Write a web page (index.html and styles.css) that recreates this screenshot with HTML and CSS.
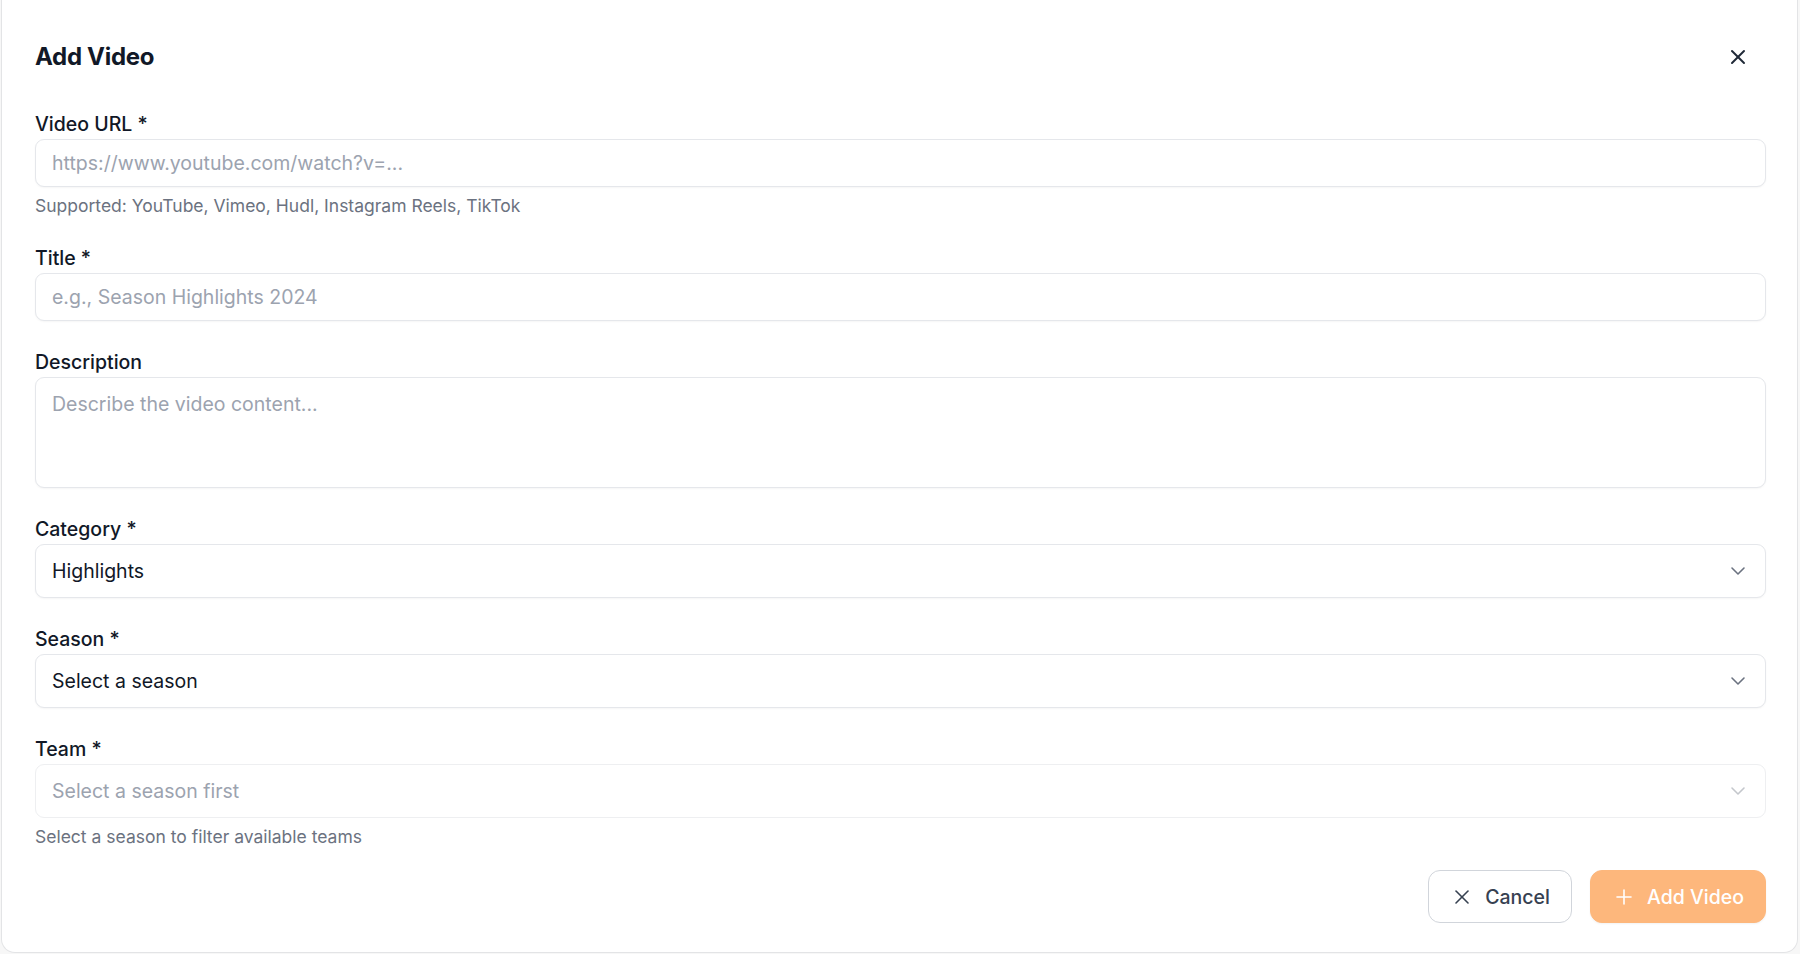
FILE: index.html
```html
<!DOCTYPE html>
<html lang="en">
<head>
<meta charset="utf-8">
<title>Add Video</title>
<link rel="stylesheet" href="styles.css">
</head>
<body>
<div class="modal">
  <div class="modal-header">
    <h2 class="modal-title">Add Video</h2>
    <button class="close-btn" aria-label="Close">
      <svg width="24" height="24" viewBox="0 0 24 24" fill="none" stroke="currentColor" stroke-width="2" stroke-linecap="round" stroke-linejoin="round"><path d="M18 6 6 18"/><path d="m6 6 12 12"/></svg>
    </button>
  </div>
  <form class="form">
    <div class="field">
      <label class="label">Video URL *</label>
      <div class="input placeholder">https://www.youtube.com/watch?v=...</div>
      <p class="help">Supported: YouTube, Vimeo, Hudl, Instagram Reels, TikTok</p>
    </div>
    <div class="field">
      <label class="label">Title *</label>
      <div class="input placeholder">e.g., Season Highlights 2024</div>
    </div>
    <div class="field">
      <label class="label">Description</label>
      <div class="textarea placeholder">Describe the video content...</div>
    </div>
    <div class="field">
      <label class="label">Category *</label>
      <div class="select">
        <span>Highlights</span>
        <svg class="chev" width="24" height="24" viewBox="0 0 24 24" fill="none" stroke="currentColor" stroke-width="1.6" stroke-linecap="round" stroke-linejoin="round"><path d="m6 9 6 6 6-6"/></svg>
      </div>
    </div>
    <div class="field">
      <label class="label">Season *</label>
      <div class="select">
        <span>Select a season</span>
        <svg class="chev" width="24" height="24" viewBox="0 0 24 24" fill="none" stroke="currentColor" stroke-width="1.6" stroke-linecap="round" stroke-linejoin="round"><path d="m6 9 6 6 6-6"/></svg>
      </div>
    </div>
    <div class="field">
      <label class="label">Team *</label>
      <div class="select disabled">
        <span>Select a season first</span>
        <svg class="chev" width="24" height="24" viewBox="0 0 24 24" fill="none" stroke="currentColor" stroke-width="1.6" stroke-linecap="round" stroke-linejoin="round"><path d="m6 9 6 6 6-6"/></svg>
      </div>
      <p class="help">Select a season to filter available teams</p>
    </div>
  </form>
  <div class="footer">
    <button class="btn btn-outline">
      <svg width="24" height="24" viewBox="0 0 24 24" fill="none" stroke="currentColor" stroke-width="1.6" stroke-linecap="round" stroke-linejoin="round"><path d="M18 6 6 18"/><path d="m6 6 12 12"/></svg>
      <span>Cancel</span>
    </button>
    <button class="btn btn-primary">
      <svg width="24" height="24" viewBox="0 0 24 24" fill="none" stroke="currentColor" stroke-width="1.6" stroke-linecap="round" stroke-linejoin="round"><path d="M5 12h14"/><path d="M12 5v14"/></svg>
      <span>Add Video</span>
    </button>
  </div>
</div>
</body>
</html>
```
FILE: styles.css
```css
* { box-sizing: border-box; }
html, body {
  margin: 0;
  padding: 0;
  height: 954px;
  background: #f7f7f7;
  font-family: Inter, "Noto Sans", "Liberation Sans", sans-serif;
  color: #111827;
  overflow: hidden;
}
.modal {
  margin-left: 1px;
  width: 1797px;
  height: 953px;
  background: #fff;
  border: 1px solid #e3e4e6;
  border-top: none;
  border-radius: 0 0 14px 14px;
  padding: 41px 31px 0 33px;
  display: flex;
  flex-direction: column;
}
.modal-header {
  height: 32px;
  display: flex;
  align-items: center;
  justify-content: space-between;
  margin-bottom: 39px;
}
.modal-title {
  margin: 0;
  font-size: 24px;
  line-height: 32px;
  font-weight: 700;
  letter-spacing: -0.3px;
  color: #111827;
}
.close-btn {
  border: none;
  background: none;
  padding: 0;
  margin-right: 16px;
  width: 24px;
  height: 24px;
  color: #1f2937;
  display: flex;
}
.form {
  display: flex;
  flex-direction: column;
  gap: 29px;
}
.field {
  display: flex;
  flex-direction: column;
}
.label {
  font-size: 19.5px;
  line-height: 24px;
  font-weight: 500;
  color: #111827;
  margin-bottom: 3px;
}
.input, .textarea, .select {
  border: 1px solid #e5e7eb;
  border-radius: 9px;
  background: #fff;
  box-shadow: 0 1px 2px rgba(0,0,0,0.04);
  font-size: 19.5px;
  padding: 0 16px;
}
.input {
  height: 48px;
  display: flex;
  align-items: center;
}
.textarea {
  height: 111px;
  padding-top: 12px;
  line-height: 28px;
}
.placeholder { color: #9ca3af; }
.select {
  height: 54px;
  display: flex;
  align-items: center;
  justify-content: space-between;
  padding-right: 15px;
  color: #111827;
}
.select .chev { color: #6b7280; }
.select.disabled {
  color: #9ca3af;
  border-color: #eeeff1;
  box-shadow: none;
}
.select.disabled .chev { color: #c4c7cc; }
.help {
  margin: 8px 0 0;
  font-size: 17.5px;
  line-height: 22px;
  color: #6b7280;
}
.footer {
  margin-top: 22px;
  display: flex;
  justify-content: flex-end;
  gap: 18px;
}
.btn {
  height: 53px;
  border-radius: 12px;
  padding: 0 21px;
  display: flex;
  align-items: center;
  gap: 11px;
  font-family: inherit;
  font-size: 19.5px;
  font-weight: 500;
  cursor: pointer;
}
.btn-outline {
  background: #fff;
  border: 1px solid #d1d5db;
  color: #374151;
}
.btn-primary {
  background: #fdb77c;
  border: 1px solid #fdb77c;
  color: #fff;
  box-shadow: 0 1px 2px rgba(0,0,0,0.05);
}
```
